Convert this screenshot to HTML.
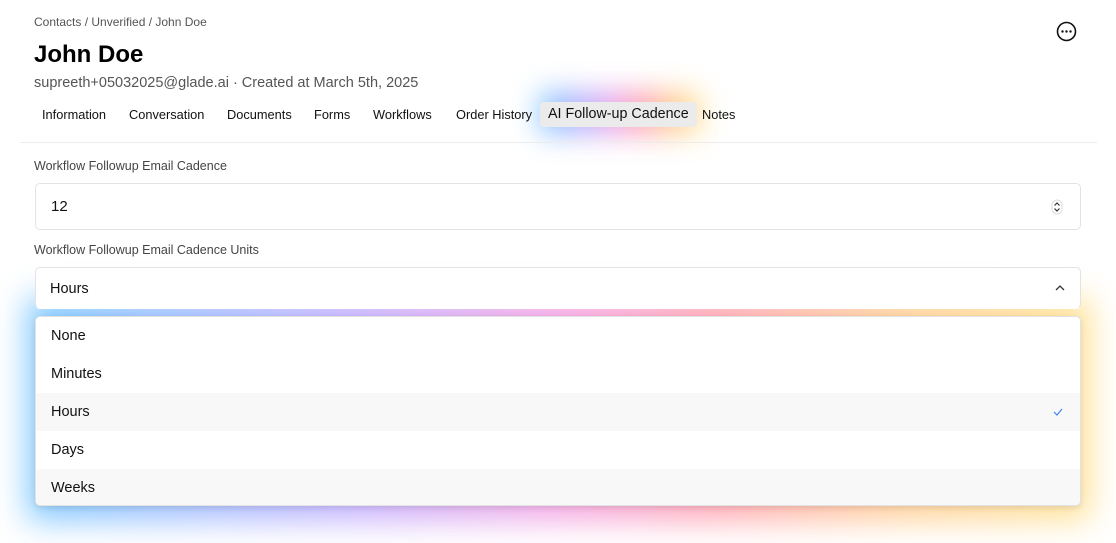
<!DOCTYPE html>
<html><head><style>
*{margin:0;padding:0;box-sizing:border-box}
body{width:1116px;height:543px;background:#fff;font-family:"Liberation Sans",sans-serif;color:#111;position:relative;overflow:hidden}
.a{position:absolute;white-space:nowrap}
.glow{position:absolute;background:linear-gradient(90deg,#6ec3ff,#b9a6ff 30%,#f39ae0 50%,#ff9aa8 65%,#ffc98a 82%,#ffe08a);filter:blur(14px);opacity:.9}
.tab{position:absolute;top:107px;font-size:12.8px;color:#111}
.box{position:absolute;left:35px;width:1046px;border:1px solid #e3e3e3;border-radius:5px;background:#fff}
.row{position:absolute;left:0;width:100%;height:38px;font-size:14.5px;padding-left:15px;line-height:38px}
</style></head><body>
<div class="a" style="left:34px;top:15px;font-size:12px;color:#555">Contacts / Unverified / John Doe</div>
<div class="a" style="left:34px;top:41px;font-size:24px;font-weight:bold;color:#000">John Doe</div>
<div class="a" style="left:34px;top:75px;font-size:14.5px;color:#555">supreeth+05032025@glade.ai · Created at March 5th, 2025</div>
<svg class="a" style="left:1056px;top:21px" width="21" height="21" viewBox="0 0 21 21"><circle cx="10.5" cy="10.5" r="9" fill="none" stroke="#111" stroke-width="1.6"/><circle cx="6.5" cy="10.5" r="1.2" fill="#111"/><circle cx="10.5" cy="10.5" r="1.2" fill="#111"/><circle cx="14.5" cy="10.5" r="1.2" fill="#111"/></svg>
<div class="glow" style="left:540px;top:92px;width:160px;height:42px"></div>
<div class="a" style="left:540px;top:102px;width:157px;height:25px;background:#ebebeb;border-radius:4px"></div>
<div class="tab" style="left:42px">Information</div>
<div class="tab" style="left:129px">Conversation</div>
<div class="tab" style="left:227px">Documents</div>
<div class="tab" style="left:314px">Forms</div>
<div class="tab" style="left:373px">Workflows</div>
<div class="tab" style="left:456px">Order History</div>
<div class="tab" style="left:548px;font-size:14.3px;top:106px">AI Follow-up Cadence</div>
<div class="tab" style="left:702px">Notes</div>
<div class="a" style="left:20px;top:142px;width:1077px;height:1px;background:#ececec"></div>
<div class="a" style="left:34px;top:159px;font-size:12.5px;color:#444">Workflow Followup Email Cadence</div>
<div class="box" style="top:183px;height:47px"><div class="a" style="left:15px;top:14px;font-size:15px">12</div>
<svg class="a" style="left:1015px;top:15px" width="12" height="16" viewBox="0 0 12 16"><rect x="1" y="1" width="10" height="14" rx="5" fill="none" stroke="#ddd"/><path d="M3.5 6.5L6 4L8.5 6.5M3.5 9.5L6 12L8.5 9.5" fill="none" stroke="#333" stroke-width="1.2"/></svg></div>
<div class="a" style="left:34px;top:243px;font-size:12.5px;color:#444">Workflow Followup Email Cadence Units</div>
<div class="glow" style="left:28px;top:298px;width:1062px;height:222px;filter:blur(16px)"></div>
<div class="box" style="top:267px;height:42px;border-bottom-color:transparent"><div class="a" style="left:14px;top:13px;font-size:14.5px">Hours</div>
<svg class="a" style="left:1018px;top:15px" width="12" height="10" viewBox="0 0 12 10"><path d="M2 7L6 3L10 7" fill="none" stroke="#333" stroke-width="1.3"/></svg></div>
<div class="box" style="top:316px;height:190px;overflow:hidden;box-shadow:0 2px 6px rgba(0,0,0,.1)">
<div class="row" style="top:0">None</div>
<div class="row" style="top:38px">Minutes</div>
<div class="row" style="top:76px;background:#f8f8f8">Hours<svg class="a" style="left:1016px;top:14px" width="12" height="10" viewBox="0 0 12 10"><path d="M2 5L5 8L10 2" fill="none" stroke="#3b82f6" stroke-width="1.2"/></svg></div>
<div class="row" style="top:114px">Days</div>
<div class="row" style="top:152px;background:#f8f8f8">Weeks</div>
</div>
</body></html>
